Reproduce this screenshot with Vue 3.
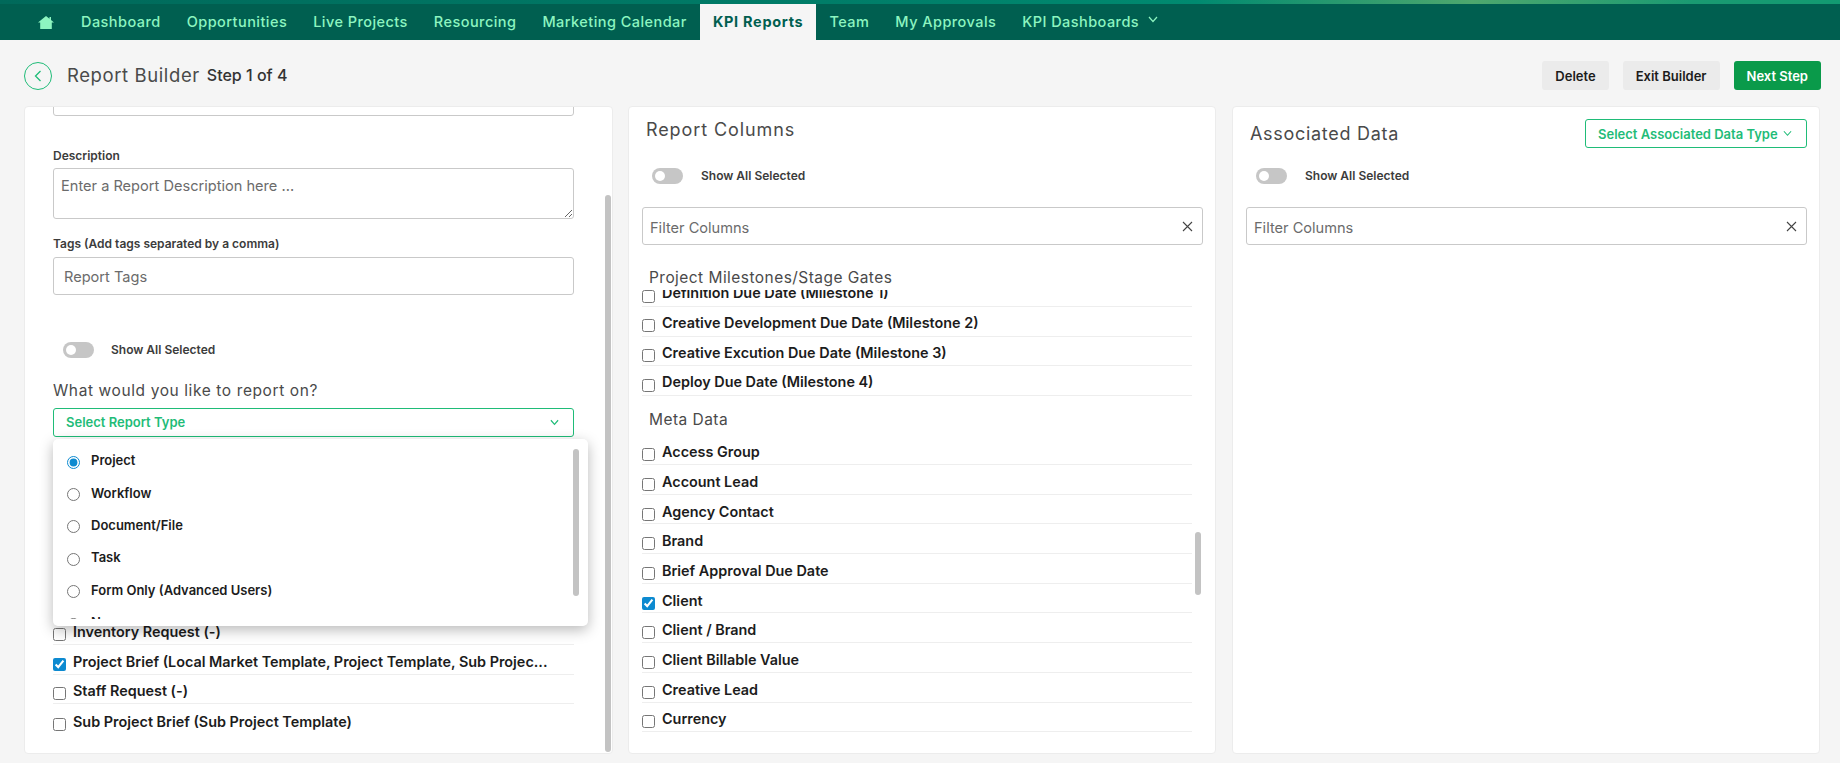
<script setup>
const navItems = ['Dashboard', 'Opportunities', 'Live Projects', 'Resourcing', 'Marketing Calendar', 'KPI Reports', 'Team', 'My Approvals', 'KPI Dashboards']
const reportTypes = ['Project', 'Workflow', 'Document/File', 'Task', 'Form Only (Advanced Users)', 'None']
const templates = [
  { label: 'Inventory Request (-)' },
  { label: 'Project Brief (Local Market Template, Project Template, Sub Projec...', checked: true },
  { label: 'Staff Request (-)' },
  { label: 'Sub Project Brief (Sub Project Template)', last: true }
]
const milestones = ['Definition Due Date (Milestone 1)', 'Creative Development Due Date (Milestone 2)', 'Creative Excution Due Date (Milestone 3)', 'Deploy Due Date (Milestone 4)']
const metaData = ['Access Group', 'Account Lead', 'Agency Contact', 'Brand', 'Brief Approval Due Date', 'Client', 'Client / Brand', 'Client Billable Value', 'Creative Lead', 'Currency']
</script>

<template>
  <div class="page">
    <div class="strip"></div>
    <nav class="nav">
      <svg class="home" viewBox="0 0 16 13" width="16" height="13"><path d="M8 0 L11.5 2.8 V1 H13 V4 L16 6.6 H13.8 V13 H2.2 V6.6 H0 Z" fill="#8df5c0"/></svg>
      <a v-for="item in navItems" :key="item" class="nav-item" :class="{ active: item === 'KPI Reports' }">
        {{ item }}
        <svg v-if="item === 'KPI Dashboards'" class="nav-chev" viewBox="0 0 10 7" width="10" height="7"><path d="M1 1 L5 5.5 L9 1" fill="none" stroke="#8df5c0" stroke-width="1.2"/></svg>
      </a>
    </nav>

    <header class="head">
      <div class="back">
        <svg viewBox="0 0 8 12" width="8" height="12"><path d="M6.5 1 L1.5 6 L6.5 11" fill="none" stroke="#1fbc78" stroke-width="1.3"/></svg>
      </div>
      <h1 class="title">Report Builder</h1>
      <span class="step">Step 1 of 4</span>
      <div class="actions">
        <button class="btn">Delete</button>
        <button class="btn">Exit Builder</button>
        <button class="btn primary">Next Step</button>
      </div>
    </header>

    <main class="panels">
      <section class="panel left">
        <input class="field cut" type="text" />
        <label class="lbl desc">Description</label>
        <textarea class="area" placeholder="Enter a Report Description here ..."></textarea>
        <label class="lbl tags">Tags (Add tags separated by a comma)</label>
        <input class="field tag-input" type="text" placeholder="Report Tags" />
        <div class="toggle-row far"><span class="toggle"><i></i></span><span class="lbl">Show All Selected</span></div>
        <div class="question">What would you like to report on?</div>
        <div class="select">
          <span>Select Report Type</span>
          <svg viewBox="0 0 10 7" width="9" height="7"><path d="M1 1 L5 5.5 L9 1" fill="none" stroke="#1fbc78" stroke-width="1.3"/></svg>
        </div>
        <div class="rows template-rows">
          <label v-for="t in templates" :key="t.label" class="row" :class="{ last: t.last }">
            <input type="checkbox" :checked="t.checked" />
            <span>{{ t.label }}</span>
          </label>
        </div>

        <div class="dropdown">
          <div class="dropdown-list">
            <label v-for="(r, i) in reportTypes" :key="r" class="option">
              <input type="radio" name="report-type" :checked="i === 0" />
              <span>{{ r }}</span>
            </label>
          </div>
          <div class="bar dd-bar"></div>
        </div>
        <div class="bar left-bar"></div>
      </section>

      <section class="panel mid">
        <h2 class="panel-title mid-title">Report Columns</h2>
        <div class="toggle-row"><span class="toggle"><i></i></span><span class="lbl">Show All Selected</span></div>
        <div class="filter">
          <input class="field" type="text" placeholder="Filter Columns" />
          <svg viewBox="0 0 11 11" width="11" height="11"><path d="M1 1 L10 10 M10 1 L1 10" stroke="#444" stroke-width="1.1"/></svg>
        </div>
        <h3 class="group first">Project Milestones/Stage Gates</h3>
        <div class="scroll">
          <div class="rows shifted">
            <label v-for="m in milestones" :key="m" class="row raised">
              <input type="checkbox" />
              <span>{{ m }}</span>
            </label>
            <h3 class="group meta">Meta Data</h3>
            <label v-for="m in metaData" :key="m" class="row">
              <input type="checkbox" :checked="m === 'Client'" />
              <span>{{ m }}</span>
            </label>
          </div>
        </div>
        <div class="bar mid-bar"></div>
      </section>

      <section class="panel right">
        <div class="right-head">
          <h2 class="panel-title">Associated Data</h2>
          <div class="assoc">
            <span>Select Associated Data Type</span>
            <svg viewBox="0 0 10 7" width="9" height="7"><path d="M1 1 L5 5.5 L9 1" fill="none" stroke="#1fbc78" stroke-width="1.2"/></svg>
          </div>
        </div>
        <div class="toggle-row right-toggle"><span class="toggle"><i></i></span><span class="lbl">Show All Selected</span></div>
        <div class="filter wide">
          <input class="field" type="text" placeholder="Filter Columns" />
          <svg viewBox="0 0 11 11" width="11" height="11"><path d="M1 1 L10 10 M10 1 L1 10" stroke="#444" stroke-width="1.1"/></svg>
        </div>
      </section>
    </main>
  </div>
</template>

<style>
html, body { margin: 0; background: #f5f5f5; }
</style>

<style scoped>
* { box-sizing: border-box; }
.page {
  width: 1840px;
  height: 763px;
  overflow: hidden;
  background: #f5f5f5;
  font-family: Inter, "Liberation Sans", sans-serif;
  color: #1c1c1c;
}
.strip {
  height: 4px;
  background: linear-gradient(90deg, #00695a 0%, #007a66 40%, #008a70 65%, #4ea76e 80%, #1a9a72 92%, #129a72 100%);
}
.nav {
  height: 36px;
  background: #005f50;
  display: flex;
  align-items: center;
  padding-left: 38px;
}
.home { margin-right: 14px; margin-top: 1px; flex: none; }
.nav-item {
  height: 36px;
  padding: 0 13px 2px;
  display: flex;
  align-items: center;
  gap: 9px;
  color: #8df5c0;
  font-size: 14.5px;
  font-weight: 500;
  letter-spacing: .45px;
  white-space: nowrap;
}
.nav-item.active { background: #f5f5f5; color: #005f50; font-weight: 700; letter-spacing: .7px; }
.nav-chev { margin-top: -4px; }

.head {
  display: flex;
  align-items: center;
  height: 66px;
  padding: 21px 19px 16px 24px;
}
.back {
  width: 28px;
  height: 28px;
  border: 1px solid #1fbc78;
  border-radius: 50%;
  display: flex;
  align-items: center;
  justify-content: center;
  padding-right: 1px;
}
.title {
  margin: -2px 0 0 15px;
  font-size: 18.5px;
  font-weight: 400;
  letter-spacing: .6px;
  color: #4a4a4a;
}
.step { margin: -2px 0 0 7px; font-size: 16px; font-weight: 500; color: #333; }
.actions { margin-left: auto; display: flex; gap: 14px; }
.btn {
  height: 29px;
  border: 0;
  border-radius: 3px;
  background: #ebebeb;
  color: #1c1c1c;
  font: 600 13px Inter, "Liberation Sans", sans-serif;
  padding: 0 13px;
}
.btn.primary { background: #0a9a4a; color: #fff; }

.panels {
  display: flex;
  margin-left: 24px;
  height: 648px;
}
.panel {
  position: relative;
  height: 648px;
  background: #fff;
  border: 1px solid #ececec;
  border-radius: 4px;
  overflow: hidden;
  width: 588px;
  flex: none;
}
.left { width: 589px; padding: 0 38px 0 28px; margin-right: 15px; }
.mid { padding: 0 0 0 13px; margin-right: 16px; }
.right { padding: 0 12px 0 13px; }

.field {
  display: block;
  width: 100%;
  height: 38px;
  border: 1px solid #c9c9c9;
  border-radius: 3px;
  background: #fff;
  font: 400 14.6px Inter, "Liberation Sans", sans-serif;
  padding: 2px 7px 0;
  outline: 0;
}
.filter .field { padding-top: 4px; }
.field::placeholder, .area::placeholder { color: #6b6b6b; opacity: 1; }
.cut { margin-top: -28px; height: 37px; }
.lbl { display: block; font-size: 12px; line-height: 16px; font-weight: 600; color: #3c3c3c; }
.desc { margin-top: 32px; }
.area {
  display: block;
  width: 100%;
  height: 51px;
  margin-top: 4px;
  border: 1px solid #c9c9c9;
  border-radius: 3px;
  font: 400 14.6px/18px Inter, "Liberation Sans", sans-serif;
  padding: 8px 7px;
  outline: 0;
}
.tags { margin-top: 17px; }
.tag-input { margin-top: 5px; padding-left: 10px; }
.toggle-row { display: flex; align-items: center; gap: 18px; margin: 26px 0 0 10px; height: 16px; }
.toggle-row.far { margin-top: 47px; gap: 17px; }
.toggle { width: 31px; height: 16px; border-radius: 8px; background: #c6c6c6; position: relative; flex: none; }
.toggle i { position: absolute; left: 3px; top: 3px; width: 10px; height: 10px; border-radius: 50%; background: #fff; }
.question { margin-top: 23px; font-size: 15.5px; line-height: 20px; letter-spacing: .6px; color: #4a4a4a; }
.select {
  margin-top: 7px;
  height: 29px;
  border: 1px solid #1fbc78;
  border-radius: 3px;
  display: flex;
  align-items: center;
  justify-content: space-between;
  padding: 0 14px 1px 12px;
  color: #1fbc78;
  font-size: 13px;
  font-weight: 600;
}
.rows { display: block; }
.template-rows { margin-top: 178.2px; }
.row {
  display: flex;
  gap: 7px;
  height: 29.7px;
  padding-top: 4px;
  align-items: center;
  border-bottom: 1px solid #eeeeee;
  font-size: 14.4px;
  font-weight: 600;
  color: #1c1c1c;
  white-space: nowrap;
}
.row.last { border-bottom: 0; }
.row input { margin: 6px 0 0; width: 13px; height: 13px; flex: none; accent-color: #0d8ad0; }
.row.raised span { margin-top: -2px; }
.row.raised input { margin-top: 5px; }

.dropdown {
  position: absolute;
  left: 28px;
  top: 332px;
  width: 535px;
  height: 187px;
  background: #fff;
  border-radius: 5px;
  box-shadow: 0 4px 14px rgba(0, 0, 0, .28);
}
.dropdown-list { height: 179.5px; overflow: hidden; padding: 6px 0 0 14px; }
.option {
  display: flex;
  align-items: center;
  gap: 11px;
  height: 32.4px;
  font-size: 13px;
  font-weight: 600;
  color: #1c1c1c;
}
.option input { margin: 2px 0 0; width: 13px; height: 13px; accent-color: #0d8ad0; flex: none; }
.option span { margin-top: -2px; }
.bar { position: absolute; width: 6px; background: #c3c3c3; border-radius: 3px; }
.dd-bar { left: 520px; top: 10px; height: 147px; }
.left-bar { left: 580px; top: 88px; height: 557px; }
.mid-bar { left: 566px; top: 425px; height: 63px; }

.panel-title { margin: 0; font-size: 18px; line-height: 24px; font-weight: 400; letter-spacing: .9px; color: #4a4a4a; }
.mid-title { margin: 11px 0 0 4px; }
.filter { position: relative; margin-top: 23px; width: 561px; }
.filter svg { position: absolute; right: 10px; top: 14px; }
.filter.wide { width: 561px; }
.group { margin: 0; font-size: 15.5px; line-height: 20px; font-weight: 400; letter-spacing: .45px; color: #4a4a4a; }
.group.first { margin: 23px 0 0 7px; }
.scroll { margin-top: 2px; height: 443px; width: 550px; overflow: hidden; }
.shifted { margin-top: -12.7px; }
.group.meta { padding: 14px 0 5.3px 7px; }

.right-head { display: flex; align-items: center; justify-content: space-between; margin-top: 12px; height: 29px; }
.right-head .panel-title { margin-left: 4px; letter-spacing: .7px; }
.assoc {
  width: 222px;
  height: 29px;
  border: 1px solid #1fbc78;
  border-radius: 3px;
  display: flex;
  align-items: center;
  gap: 5px;
  padding-left: 12px;
  color: #1fbc78;
  font-size: 13px;
  font-weight: 600;
  white-space: nowrap;
}
.right-toggle { margin-top: 20px; }
</style>
